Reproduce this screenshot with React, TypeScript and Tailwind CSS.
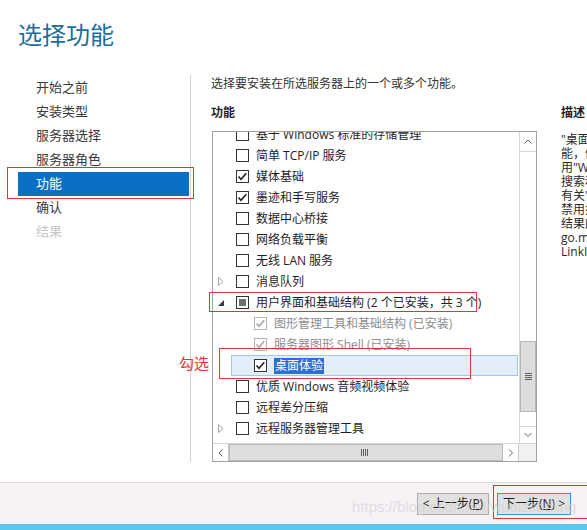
import React from 'react'

type CheckState = 'off' | 'on' | 'mixed' | 'installed'

type Feature = {
  label: string
  level: 0 | 1
  state: CheckState
  expander?: 'closed' | 'open'
  selected?: boolean
}

const navItems = [
  { label: '开始之前' },
  { label: '安装类型' },
  { label: '服务器选择' },
  { label: '服务器角色' },
  { label: '功能', active: true },
  { label: '确认' },
  { label: '结果', disabled: true },
]

const features: Feature[] = [
  { label: '基于 Windows 标准的存储管理', level: 0, state: 'off' },
  { label: '简单 TCP/IP 服务', level: 0, state: 'off' },
  { label: '媒体基础', level: 0, state: 'on' },
  { label: '墨迹和手写服务', level: 0, state: 'on' },
  { label: '数据中心桥接', level: 0, state: 'off' },
  { label: '网络负载平衡', level: 0, state: 'off' },
  { label: '无线 LAN 服务', level: 0, state: 'off' },
  { label: '消息队列', level: 0, state: 'off', expander: 'closed' },
  { label: '用户界面和基础结构 (2 个已安装，共 3 个)', level: 0, state: 'mixed', expander: 'open' },
  { label: '图形管理工具和基础结构 (已安装)', level: 1, state: 'installed' },
  { label: '服务器图形 Shell (已安装)', level: 1, state: 'installed' },
  { label: '桌面体验', level: 1, state: 'on', selected: true },
  { label: '优质 Windows 音频视频体验', level: 0, state: 'off' },
  { label: '远程差分压缩', level: 0, state: 'off' },
  { label: '远程服务器管理工具', level: 0, state: 'off', expander: 'closed' },
]

const description = [
  '"桌面体验"包括 Windows 8.1 的功',
  '能，例如"Windows 搜索"。使',
  '用"Windows 搜索"可以在设备',
  '搜索和 Internet 中进行搜索。',
  '有关"Windows 搜索"以及如何',
  '禁用搜索 Internet 并获取 Web',
  '结果的详细信息，请参阅 http://',
  'go.microsoft.com/fwlink/?',
  'LinkID=309024',
]

const Checkbox = ({ state }: { state: CheckState }) => {
  const border = state === 'installed' ? 'border-[#b5b5b5]' : 'border-[#333333]'
  return (
    <span className={`w-[13px] h-[13px] border ${border} bg-white flex items-center justify-center shrink-0`}>
      {(state === 'on' || state === 'installed') && (
        <svg width="11" height="11" viewBox="0 0 11 11">
          <path
            d="M1.5 5.5 L4 8.2 L9.3 2.2"
            fill="none"
            stroke={state === 'installed' ? '#a8a8a8' : '#1e1e1e'}
            strokeWidth="1.6"
          />
        </svg>
      )}
      {state === 'mixed' && <span className="w-[7px] h-[7px] bg-[#6e6e6e]" />}
    </span>
  )
}

const Expander = ({ kind }: { kind?: 'closed' | 'open' }) => {
  if (kind === 'closed')
    return (
      <svg width="6" height="9" viewBox="0 0 6 9">
        <path d="M0.5 0.5 L5 4.5 L0.5 8.5 Z" fill="none" stroke="#a6a6a6" />
      </svg>
    )
  if (kind === 'open')
    return (
      <svg width="6" height="6" viewBox="0 0 6 6">
        <path d="M6 0 L6 6 L0 6 Z" fill="#3c3c3c" />
      </svg>
    )
  return null
}

const FeatureRow = ({ f }: { f: Feature }) => {
  const textColor = f.state === 'installed' ? 'text-[#8d8d8d]' : 'text-[#1e1e1e]'

  if (f.selected) {
    return (
      <div className="h-[21px] flex pl-[18px] pr-px">
        <div className="flex-1 flex items-center gap-[7px] pl-[22px] bg-[#e3eefb] border border-[#9ec8f2]">
          <Checkbox state={f.state} />
          <span className="bg-[#2f6fcf] text-white px-px leading-[16px]">{f.label}</span>
        </div>
      </div>
    )
  }

  return (
    <div className="h-[21px] flex items-center whitespace-nowrap">
      <span className={`${f.level === 1 ? 'w-[41px]' : 'w-[23px]'} shrink-0 flex items-center pl-[5px]`}>
        <Expander kind={f.expander} />
      </span>
      <Checkbox state={f.state} />
      <span className={`ml-[7px] ${textColor}`}>{f.label}</span>
    </div>
  )
}

const Chevron = ({ dir }: { dir: 'up' | 'down' | 'left' | 'right' }) => {
  const d = {
    up: 'M0.5 4.5 L4 1 L7.5 4.5',
    down: 'M0.5 1 L4 4.5 L7.5 1',
    left: 'M4.5 0.5 L1 4 L4.5 7.5',
    right: 'M1 0.5 L4.5 4 L1 7.5',
  }[dir]
  const vertical = dir === 'up' || dir === 'down'
  return (
    <svg width={vertical ? 8 : 6} height={vertical ? 6 : 8} viewBox={vertical ? '0 0 8 6' : '0 0 6 8'}>
      <path d={d} fill="none" stroke="#606060" strokeWidth="1" />
    </svg>
  )
}

export default function App() {
  return (
    <div className="relative w-[587px] h-[530px] overflow-hidden bg-white font-['Open_Sans','Noto_Sans_CJK_SC',sans-serif] text-[12px] text-[#1e1e1e]">
      {/* Title */}
      <div className="h-[75px] pl-[18px] pt-[20px]">
        <h1 className="text-[24px] leading-[30px] text-[#1a6d9c] font-normal">选择功能</h1>
      </div>

      {/* Main */}
      <div className="flex h-[387px]">
        <nav className="w-[191px] shrink-0 border-r border-[#d2d2d2] pt-[1px]">
          {navItems.map((item) => (
            <div
              key={item.label}
              className={`h-[24px] ml-[18px] w-[171px] pl-[18px] flex items-center text-[13px] ${
                item.active ? 'bg-[#0b6fc3] text-white' : item.disabled ? 'text-[#c6c6c6]' : 'text-[#3a3a3a]'
              }`}
            >
              {item.label}
            </div>
          ))}
        </nav>

        <div className="flex-1 pl-[21px]">
          <p className="leading-[18px] -ml-px text-[#333]">选择要安装在所选服务器上的一个或多个功能。</p>
          <div className="flex mt-[11px]">
            <div className="w-[325px] shrink-0">
              <div className="leading-[18px] font-bold -ml-px">功能</div>
              {/* Feature list box */}
              <div className="mt-[9px] h-[331px] border border-[#a3a3a3] flex flex-col">
                <div className="flex flex-1 min-h-0">
                  <div className="flex-1 overflow-hidden">
                    <div className="-mt-[8px]">
                      {features.map((f) => (
                        <FeatureRow key={f.label} f={f} />
                      ))}
                    </div>
                  </div>
                  {/* vertical scrollbar */}
                  <div className="w-[17px] border-l border-[#d6d6d6] flex flex-col bg-white">
                    <div className="h-[20px] border-b border-[#d6d6d6] flex items-center justify-center">
                      <Chevron dir="up" />
                    </div>
                    <div className="flex-1 flex flex-col">
                      <div className="h-[189px]" />
                      <div className="h-[71px] bg-[#dcdcdc] border border-[#b8b8b8] flex flex-col items-center justify-center gap-[1px]">
                        <span className="w-[7px] h-px bg-[#606060]" />
                        <span className="w-[7px] h-px bg-[#606060]" />
                        <span className="w-[7px] h-px bg-[#606060]" />
                        <span className="w-[7px] h-px bg-[#606060]" />
                      </div>
                    </div>
                    <div className="h-[17px] border-t border-[#d6d6d6] flex items-center justify-center">
                      <Chevron dir="down" />
                    </div>
                  </div>
                </div>
                {/* horizontal scrollbar */}
                <div className="h-[18px] flex border-t border-[#d6d6d6]">
                  <div className="w-[16px] border-r border-[#c8c8c8] flex items-center justify-center">
                    <Chevron dir="left" />
                  </div>
                  <div className="flex-1 bg-[#dedede] border border-[#b8b8b8] flex items-center justify-end pr-[134px] gap-[1px]">
                    <span className="w-px h-[7px] bg-[#606060]" />
                    <span className="w-px h-[7px] bg-[#606060]" />
                    <span className="w-px h-[7px] bg-[#606060]" />
                    <span className="w-px h-[7px] bg-[#606060]" />
                  </div>
                  <div className="w-[16px] border-r border-[#c8c8c8] flex items-center justify-center bg-white">
                    <Chevron dir="right" />
                  </div>
                  <div className="w-[17px] bg-[#f2f0f2]" />
                </div>
              </div>
            </div>

            <div className="ml-[24px] w-[200px] shrink-0 whitespace-nowrap">
              <div className="leading-[18px] font-bold">描述</div>
              <div className="mt-[11px] leading-[14px] text-[#2a2a2a]">
                {description.map((line) => (
                  <div key={line}>{line}</div>
                ))}
              </div>
            </div>
          </div>
        </div>
      </div>

      {/* Footer */}
      <div className="mt-[20px] h-[42px] border-t border-[#dadada] bg-[#f6f2f6] flex justify-end items-start pt-[10px] pr-[16px] gap-[8px]">
        <button className="w-[72px] h-[22px] border border-[#adadad] bg-[#e1e1e1] text-[12px] text-[#1e1e1e] flex items-center justify-center">
          &lt; 上一步(<span className="underline">P</span>)
        </button>
        <button className="w-[74px] h-[22px] border border-[#3d8ee6] bg-[#e1e1e1] text-[12px] text-[#1e1e1e] flex items-center justify-center">
          下一步(<span className="underline">N</span>) &gt;
        </button>
      </div>
      <div className="h-[6px] bg-[#5bc6ee]" />

      {/* annotations */}
      <div className="absolute left-[7px] top-[167px] w-[187px] h-[32px] border border-[#e53333]" />
      <div className="absolute left-[209px] top-[292px] w-[268px] h-[20px] border border-[#e53333]" />
      <div className="absolute left-[219px] top-[348px] w-[252px] h-[31px] border border-[#e53333]" />
      <div className="absolute left-[493px] top-[485px] w-[100px] h-[34px] border border-[#e53333]" />
      <span className="absolute left-[179px] top-[353px] text-[15px] leading-[20px] text-[#e53333]">勾选</span>
      <span className="absolute left-[352px] top-[497px] text-[15px] leading-[20px] font-['Liberation_Sans',sans-serif] text-[#d2ced2]/60 whitespace-nowrap">
        https://blog.csdn.net/wudizsooling
      </span>
    </div>
  )
}
